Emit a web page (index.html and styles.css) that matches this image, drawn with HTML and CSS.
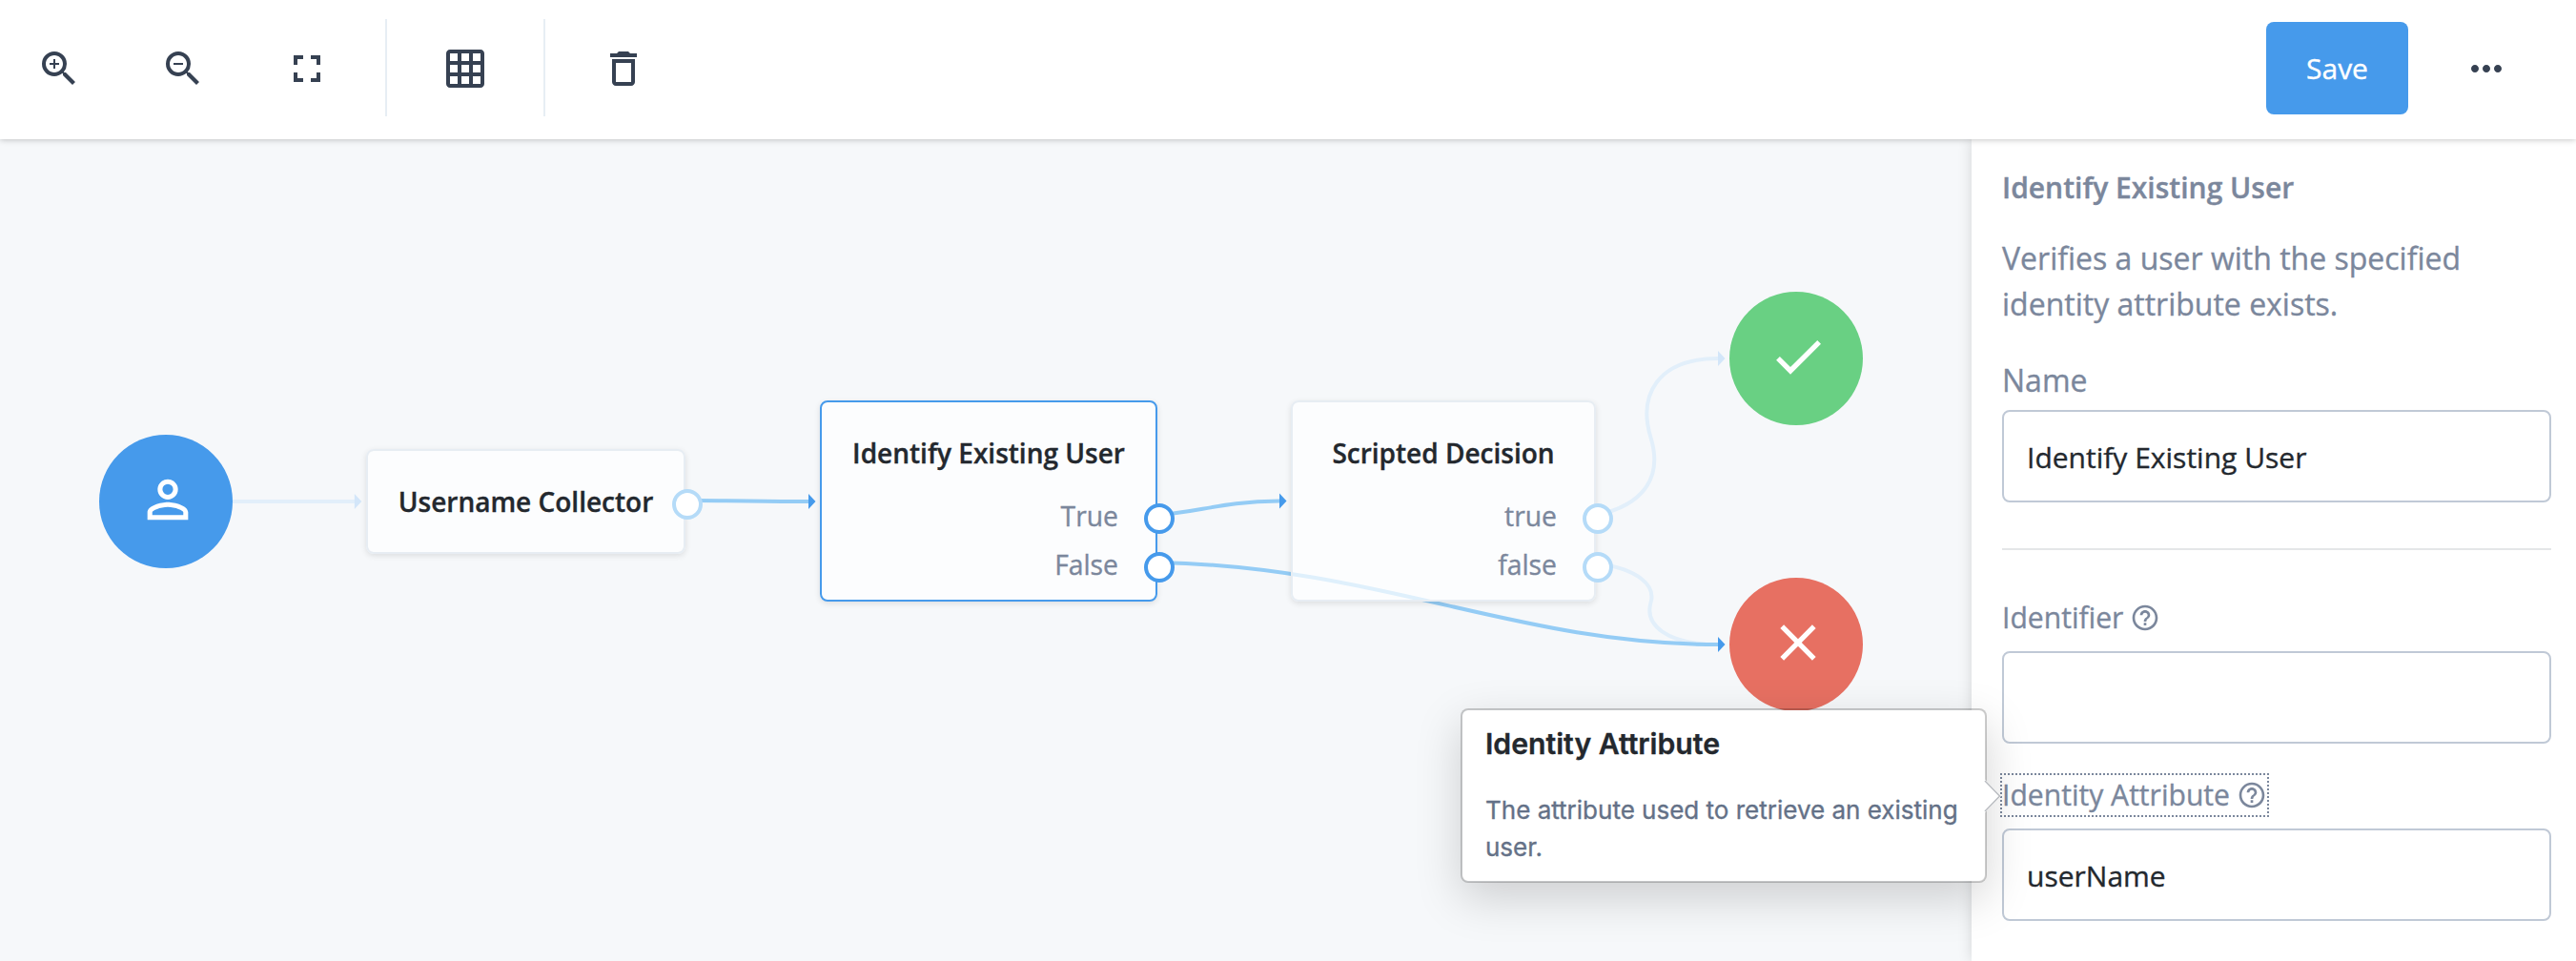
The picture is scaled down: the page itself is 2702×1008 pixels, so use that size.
FILE: index.html
```html
<!DOCTYPE html>
<html lang="en">
<head>
<meta charset="utf-8">
<title>Journey editor</title>
<link rel="stylesheet" href="styles.css">
</head>
<body>
<div class="app">
  <header class="toolbar">
    <div class="tools">
      <button class="tool" aria-label="Zoom in"><svg class="icon" viewBox="0 0 24 24"><path d="M15.5 14h-.79l-.28-.27A6.471 6.471 0 0 0 16 9.5 6.5 6.5 0 1 0 9.5 16c1.61 0 3.09-.59 4.23-1.57l.27.28v.79l5 4.99L20.49 19l-4.99-5zm-6 0C7.01 14 5 11.99 5 9.5S7.01 5 9.5 5 14 7.01 14 9.5 11.99 14 9.5 14zm.5-7H9v2H7v1h2v2h1v-2h2V9h-2z"/></svg></button>
      <button class="tool" aria-label="Zoom out"><svg class="icon" viewBox="0 0 24 24"><path d="M15.5 14h-.79l-.28-.27A6.471 6.471 0 0 0 16 9.5 6.5 6.5 0 1 0 9.5 16c1.61 0 3.09-.59 4.23-1.57l.27.28v.79l5 4.99L20.49 19l-4.99-5zm-6 0C7.01 14 5 11.99 5 9.5S7.01 5 9.5 5 14 7.01 14 9.5 11.99 14 9.5 14zM7 9h5v1H7z"/></svg></button>
      <button class="tool" aria-label="Fit to screen"><svg class="icon" viewBox="0 0 24 24"><path d="M7 14H5v5h5v-2H7v-3zm-2-4h2V7h3V5H5v5zm12 7h-3v2h5v-5h-2v3zM14 5v2h3v3h2V5h-5z"/></svg></button>
    </div>
    <div class="separator"></div>
    <button class="tool" aria-label="Align to grid"><svg class="icon" viewBox="0 0 24 24"><path d="M20 2H4c-1.100 0-2 .9-2 2v16c0 1.100.9 2 2 2h16c1.100 0 2-.9 2-2V4c0-1.100-.9-2-2-2zM8 20H4v-4h4v4zm0-6H4v-4h4v4zm0-6H4V4h4v4zm6 12h-4v-4h4v4zm0-6h-4v-4h4v4zm0-6h-4V4h4v4zm6 12h-4v-4h4v4zm0-6h-4v-4h4v4zm0-6h-4V4h4v4z"/></svg></button>
    <div class="separator"></div>
    <button class="tool" aria-label="Delete"><svg class="icon" viewBox="0 0 24 24"><path d="M6 19c0 1.100.9 2 2 2h8c1.100 0 2-.9 2-2V7H6v12zM8 9h8v10H8V9zm7.500-5l-1-1h-5l-1 1H5v2h14V4z"/></svg></button>
    <div class="actions">
      <button class="save">Save</button>
      <button class="tool" aria-label="More"><svg class="icon" viewBox="0 0 24 24"><path d="M6 10c-1.100 0-2 .9-2 2s.9 2 2 2 2-.9 2-2-.9-2-2-2zm12 0c-1.100 0-2 .9-2 2s.9 2 2 2 2-.9 2-2-.9-2-2-2zm-6 0c-1.100 0-2 .9-2 2s.9 2 2 2 2-.9 2-2-.9-2-2-2z"/></svg></button>
    </div>
  </header>
  <div class="workspace">
    <main class="canvas">
      <!-- connections, in canvas coordinates -->
      <svg class="links" viewBox="0 0 2068 862">
        <path class="link faint" d="M244 380H372"/>
        <path class="arrow faint" d="M371.800 372v16l7.500-8z"/>
        <path class="link faint" d="M1676 394C1721 384 1745 357 1731.500 313C1718 269 1738 230 1802 230"/>
        <path class="arrow faint" d="M1802 222v16l7.500-8z"/>
        <path class="link faint" d="M1676 445C1718 451 1737 468 1731.500 486C1725 509 1747 530 1802 530"/>
        <path class="link" d="M729 379C770 379 800 380 848 380"/>
        <path class="arrow" d="M848 372v16l7.500-8z"/>
        <path class="link" d="M1216 394C1258 391 1283 380 1342 379.500"/>
        <path class="arrow" d="M1342 371.500v16l7.500-8z"/>
        <path class="link" d="M1216 444C1450 449 1590 530 1802 530"/>
        <path class="arrow" d="M1802 522v16l7.500-8z"/>
      </svg>

      <div class="terminal start"><svg class="glyph" viewBox="0 0 24 24"><path d="M12 5.900a2.100 2.100 0 1 1 0 4.200 2.100 2.100 0 0 1 0-4.200m0 9c2.970 0 6.100 1.460 6.100 2.100v1.100H5.900V17c0-.64 3.130-2.100 6.100-2.100M12 4C9.790 4 8 5.790 8 8s1.790 4 4 4 4-1.790 4-4-1.790-4-4-4zm0 9c-2.670 0-8 1.340-8 4v3h16v-3c0-2.660-5.330-4-8-4z"/></svg></div>

      <section class="node username">
        <h2 class="node-title">Username Collector</h2>
        <span class="socket"></span>
      </section>

      <section class="node identify selected">
        <h2 class="node-title">Identify Existing User</h2>
        <div class="outcome">True<span class="socket"></span></div>
        <div class="outcome">False<span class="socket"></span></div>
      </section>

      <section class="node scripted">
        <h2 class="node-title">Scripted Decision</h2>
        <div class="outcome">true<span class="socket"></span></div>
        <div class="outcome">false<span class="socket"></span></div>
      </section>

      <div class="terminal success"><svg class="glyph" viewBox="0 0 24 24"><path d="M9 16.170L4.830 12l-1.420 1.410L9 19 21 7l-1.410-1.410z"/></svg></div>
      <div class="terminal failure"><svg class="glyph" viewBox="0 0 24 24"><path d="M19 6.410L17.590 5 12 10.590 6.410 5 5 6.410 10.590 12 5 17.590 6.410 19 12 13.410 17.590 19 19 17.590 13.410 12z"/></svg></div>
    </main>

    <aside class="panel">
      <h1 class="panel-title">Identify Existing User</h1>
      <p class="panel-text">Verifies a user with the specified identity attribute exists.</p>
      <label class="name-label" for="name">Name</label>
      <input class="field" id="name" value="Identify Existing User">
      <hr class="rule">
      <label class="label" for="identifier">Identifier<svg class="help" viewBox="0 0 24 24"><path d="M11 18h2v-2h-2v2zm1-16C6.480 2 2 6.480 2 12s4.480 10 10 10 10-4.480 10-10S17.520 2 12 2zm0 18c-4.410 0-8-3.590-8-8s3.590-8 8-8 8 3.590 8 8-3.590 8-8 8zm0-14c-2.210 0-4 1.790-4 4h2c0-1.100.9-2 2-2s2 .9 2 2c0 2-3 1.750-3 5h2c0-2.250 3-2.500 3-5 0-2.210-1.790-4-4-4z"/></svg></label>
      <input class="field" id="identifier" value="">
      <label class="label focused" for="attribute">Identity Attribute<svg class="help" viewBox="0 0 24 24"><path d="M11 18h2v-2h-2v2zm1-16C6.480 2 2 6.480 2 12s4.480 10 10 10 10-4.480 10-10S17.520 2 12 2zm0 18c-4.410 0-8-3.590-8-8s3.590-8 8-8 8 3.590 8 8-3.590 8-8 8zm0-14c-2.210 0-4 1.790-4 4h2c0-1.100.9-2 2-2s2 .9 2 2c0 2-3 1.750-3 5h2c0-2.250 3-2.500 3-5 0-2.210-1.790-4-4-4z"/></svg></label>
      <input class="field" id="attribute" value="userName">
    </aside>
  </div>

  <div class="popover" role="tooltip">
    <h3 class="popover-title">Identity Attribute</h3>
    <p class="popover-text">The attribute used to retrieve an existing user.</p>
    <svg class="popover-arrow" viewBox="0 0 17 34"><path class="tip" d="M0 1L15.500 17 0 33z"/><path class="tip-edge" d="M0 1L15.500 17 0 33"/></svg>
  </div>
</div>
</body>
</html>
```
FILE: styles.css
```css
* { box-sizing: border-box; }

body {
  margin: 0;
  font-family: "Open Sans", "Noto Sans", sans-serif;
  color: #23282e;
  background: #fff;
  -webkit-text-stroke: .35px currentColor;
}

h1, h2, h3, p { margin: 0; }

button {
  padding: 0;
  border: 0;
  background: none;
  font: inherit;
}

.app {
  position: relative;
  display: flex;
  flex-direction: column;
  height: 1008px;
  overflow: hidden;
}

/* Toolbar */
.toolbar {
  position: relative;
  z-index: 2;
  display: flex;
  flex: none;
  align-items: center;
  gap: 58px;
  height: 146px;
  padding: 0 70px 2px 38px;
  background: #fff;
  box-shadow: 0 1px 6px rgba(0, 0, 0, .22);
}

.tools { display: flex; gap: 82px; }

.tool { display: block; width: 48px; height: 48px; }

.icon { display: block; width: 48px; height: 48px; fill: #364152; }

.separator { width: 2px; height: 102px; margin-bottom: 2px; background: #e7eef4; }

.actions { display: flex; align-items: center; gap: 58px; margin-left: auto; }

.save {
  width: 149px;
  height: 97px;
  margin-bottom: 1px;
  padding-bottom: 1px;
  border-radius: 8px;
  background: #469aeb;
  color: #fff;
  font-size: 30px;
}

/* Workspace */
.workspace { display: flex; flex: 1; min-height: 0; }

.canvas { position: relative; flex: 1; background: #f6f8fa; }

.links { position: absolute; inset: 0; width: 2068px; height: 862px; }
.link { fill: none; stroke: #94ccf5; stroke-width: 4; }
.link.faint { stroke: #e2effa; }
.arrow { fill: #469aeb; }
.arrow.faint { fill: #d3e6f9; }

.terminal {
  position: absolute;
  display: flex;
  align-items: center;
  justify-content: center;
  width: 140px;
  height: 140px;
  padding: 0 0 4px 4px;
  border-radius: 50%;
}
.start { left: 104px; top: 310px; background: #469aeb; }
.success { left: 1814px; top: 160px; background: #69d083; }
.failure { left: 1814px; top: 460px; background: #e77062; }

.glyph { width: 64px; height: 64px; fill: #fff; }

.node {
  position: absolute;
  border: 2px solid #e7edf3;
  border-radius: 8px;
  background: rgba(255, 255, 255, .7);
  background-clip: padding-box;
  box-shadow: 0 2px 6px rgba(0, 0, 0, .11);
}
.username { left: 384px; top: 325px; width: 335px; height: 110px; padding-top: 32px; }
.identify { left: 860px; top: 274px; width: 354px; height: 211px; padding-top: 32px; }
.scripted { left: 1354px; top: 274px; width: 320px; height: 211px; padding-top: 32px; }
.node.selected { border-color: #469aeb; }

.node-title {
  font-size: 28px;
  font-weight: 600;
  line-height: 42px;
  text-align: center;
}
.node-title + .outcome { margin-top: 20px; }

.outcome {
  position: relative;
  height: 51px;
  padding-right: 39px;
  color: #7b879c;
  font-size: 28.3px;
  line-height: 51px;
  text-align: right;
}

.socket {
  position: absolute;
  right: -20px;
  top: 12px;
  width: 32px;
  height: 32px;
  border: 4px solid #b5dbf8;
  border-radius: 50%;
  background: #fff;
}
.username .socket { top: 40px; }
.selected .socket { border-color: #469aeb; }

/* Properties panel */
.panel {
  position: relative;
  z-index: 1;
  display: flex;
  flex-direction: column;
  align-items: flex-start;
  width: 634px;
  padding: 28px 26px 0 32px;
  background: #fff;
  color: #7b879c;
  box-shadow: 0 0 14px rgba(0, 0, 0, .14);
}

.panel-title { font-size: 30px; font-weight: 600; line-height: 45px; }

.panel-text { margin-top: 28px; font-size: 32px; line-height: 48px; }

.name-label { margin: 32px 0 7px; font-size: 32px; line-height: 48px; }

.field {
  width: 576px;
  height: 97px;
  padding: 2px 22px 0 24px;
  border: 2px solid #c0c9d6;
  border-radius: 8px;
  background: #fff;
  color: #23282e;
  font: 30px "Open Sans", "Noto Sans", sans-serif;
}

.rule {
  width: 576px;
  height: 2px;
  margin: 48px 0 50px;
  border: 0;
  background: #e4e6e8;
}

.label {
  display: flex;
  align-items: center;
  gap: 7px;
  height: 42px;
  margin-bottom: 14px;
  font-size: 30.1px;
  line-height: 44px;
}
.field + .label { margin-top: 33px; }
.focused { outline: 2px dotted #7b879c; }

.help { width: 32px; height: 32px; fill: #7b879c; }

/* Help popover */
.popover {
  position: absolute;
  z-index: 3;
  left: 1532px;
  top: 743px;
  width: 552px;
  height: 183px;
  padding: 13px 20px 0 24px;
  border: 2px solid rgba(0, 0, 0, .2);
  border-radius: 8px;
  background: #fff;
  background-clip: padding-box;
  box-shadow: 0 16px 48px rgba(0, 0, 0, .17);
  font-family: Inter, "Liberation Sans", sans-serif;
}

.popover-title { font-size: 30.2px; font-weight: 600; line-height: 45px; }

.popover-text {
  margin-top: 27px;
  color: #647187;
  font-size: 26px;
  line-height: 39px;
}

.popover-arrow {
  position: absolute;
  right: -17px;
  top: 73px;
  width: 17px;
  height: 34px;
  overflow: visible;
}
.tip { fill: #fff; stroke: #fff; stroke-width: 2; }
.tip-edge { fill: none; stroke: #b9bcc0; stroke-width: 1.5; }
```
